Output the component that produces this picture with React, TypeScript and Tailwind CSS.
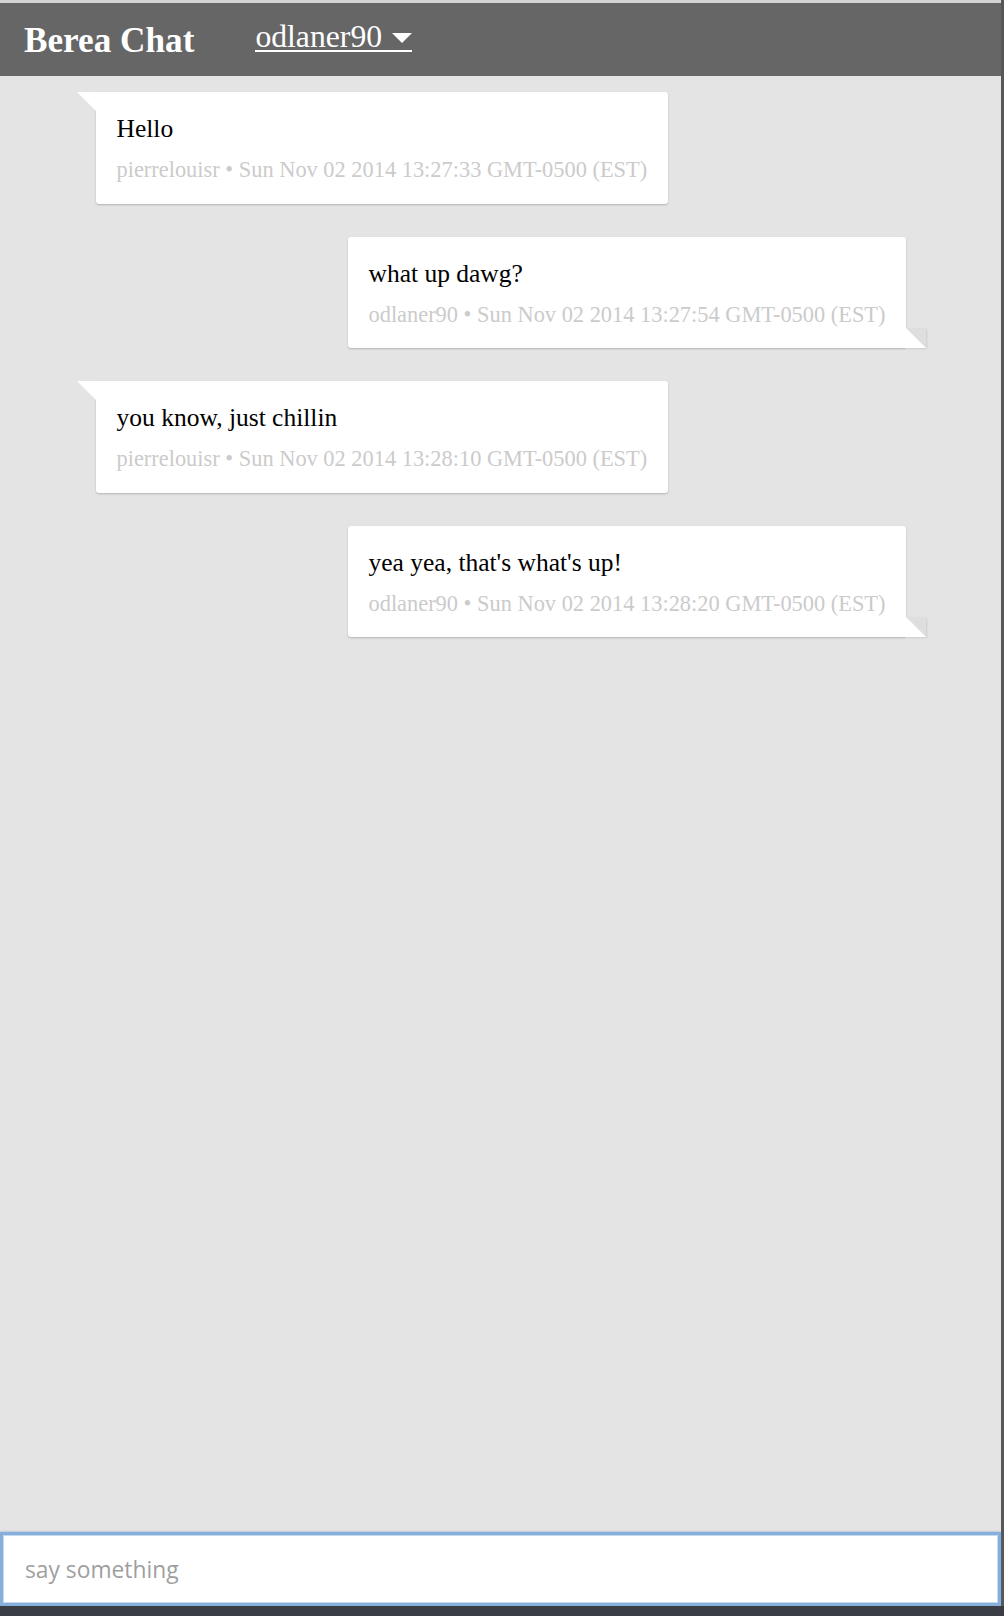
const messages = [
  { text: 'Hello', user: 'pierrelouisr', time: 'Sun Nov 02 2014 13:27:33 GMT-0500 (EST)', mine: false },
  { text: 'what up dawg?', user: 'odlaner90', time: 'Sun Nov 02 2014 13:27:54 GMT-0500 (EST)', mine: true },
  { text: 'you know, just chillin', user: 'pierrelouisr', time: 'Sun Nov 02 2014 13:28:10 GMT-0500 (EST)', mine: false },
  { text: "yea yea, that's what's up!", user: 'odlaner90', time: 'Sun Nov 02 2014 13:28:20 GMT-0500 (EST)', mine: true },
];

function Bubble({ text, user, time, mine }: { text: string; user: string; time: string; mine: boolean }) {
  return (
    <div className={mine ? 'flex justify-end mr-[95px]' : 'flex justify-start ml-[96px]'}>
      <div
        className={
          'relative bg-white px-[20.5px] pt-[20px] pb-[20.5px] shadow-[0_1px_2px_rgba(0,0,0,0.22)] ' +
          (mine ? 'rounded-[3px] rounded-br-none' : 'rounded-[3px] rounded-tl-none')
        }
      >
        {/* tail */}
        {mine ? (
          <div className="absolute left-full bottom-0 w-[20px] h-[20px] bg-[#dedede] shadow-[1px_1px_2px_rgba(0,0,0,0.1)]">
            <div className="w-0 h-0 border-l-[20px] border-l-white border-t-[20px] border-t-transparent" />
          </div>
        ) : (
          <div className="absolute right-full top-0 w-0 h-0 border-r-[19px] border-r-white border-b-[19px] border-b-transparent" />
        )}
        <p className="text-[25.5px] leading-[33px] text-black whitespace-nowrap">{text}</p>
        <p className="mt-[12px] text-[22.4px] leading-[26px] text-[#cbcbcb] whitespace-nowrap">
          {user} • {time}
        </p>
      </div>
    </div>
  );
}

export default function App() {
  return (
    <div className="w-[1004px] h-[1616px] flex flex-col bg-[#3a3d44] font-['Liberation_Serif',serif]">
      <div className="flex-1 flex flex-col bg-[#e4e4e4] border-r-[3px] border-[#575757]">
        <div className="h-[3px] bg-[#d4d4d4]" />

        {/* header */}
        <div className="h-[73px] bg-[#666666] flex items-start pl-[24px] text-white">
          <h1 className="mt-[18px] text-[35.2px] leading-[40px] font-bold">Berea Chat</h1>
          <div className="ml-[61px] mt-[21px] flex items-end border-b-2 border-white text-[31.7px] leading-[26px]">
            <span>odlaner90</span>
            <span className="ml-[10px] mb-[7px] w-0 h-0 border-x-[10px] border-x-transparent border-t-[10px] border-t-white" />
          </div>
        </div>

        {/* messages */}
        <div className="flex-1 flex flex-col gap-[33px] pt-[16px]">
          {messages.map((m, i) => (
            <Bubble key={i} {...m} />
          ))}
        </div>

        {/* input */}
        <div className="h-[74px] border-[3px] border-[#86afdb] bg-white shadow-[0_0_2px_rgba(70,130,200,0.6)]">
          <div className="h-full border border-[#c6daef] flex items-center pl-[21px] pt-[3px]">
            <input
              placeholder="say something"
              className="w-full outline-none bg-transparent font-['Open_Sans',sans-serif] text-[22.8px] text-black placeholder:text-[#9f9f9f]"
            />
          </div>
        </div>
      </div>
      <div className="h-[10px] bg-[#3a3d44]" />
    </div>
  );
}
